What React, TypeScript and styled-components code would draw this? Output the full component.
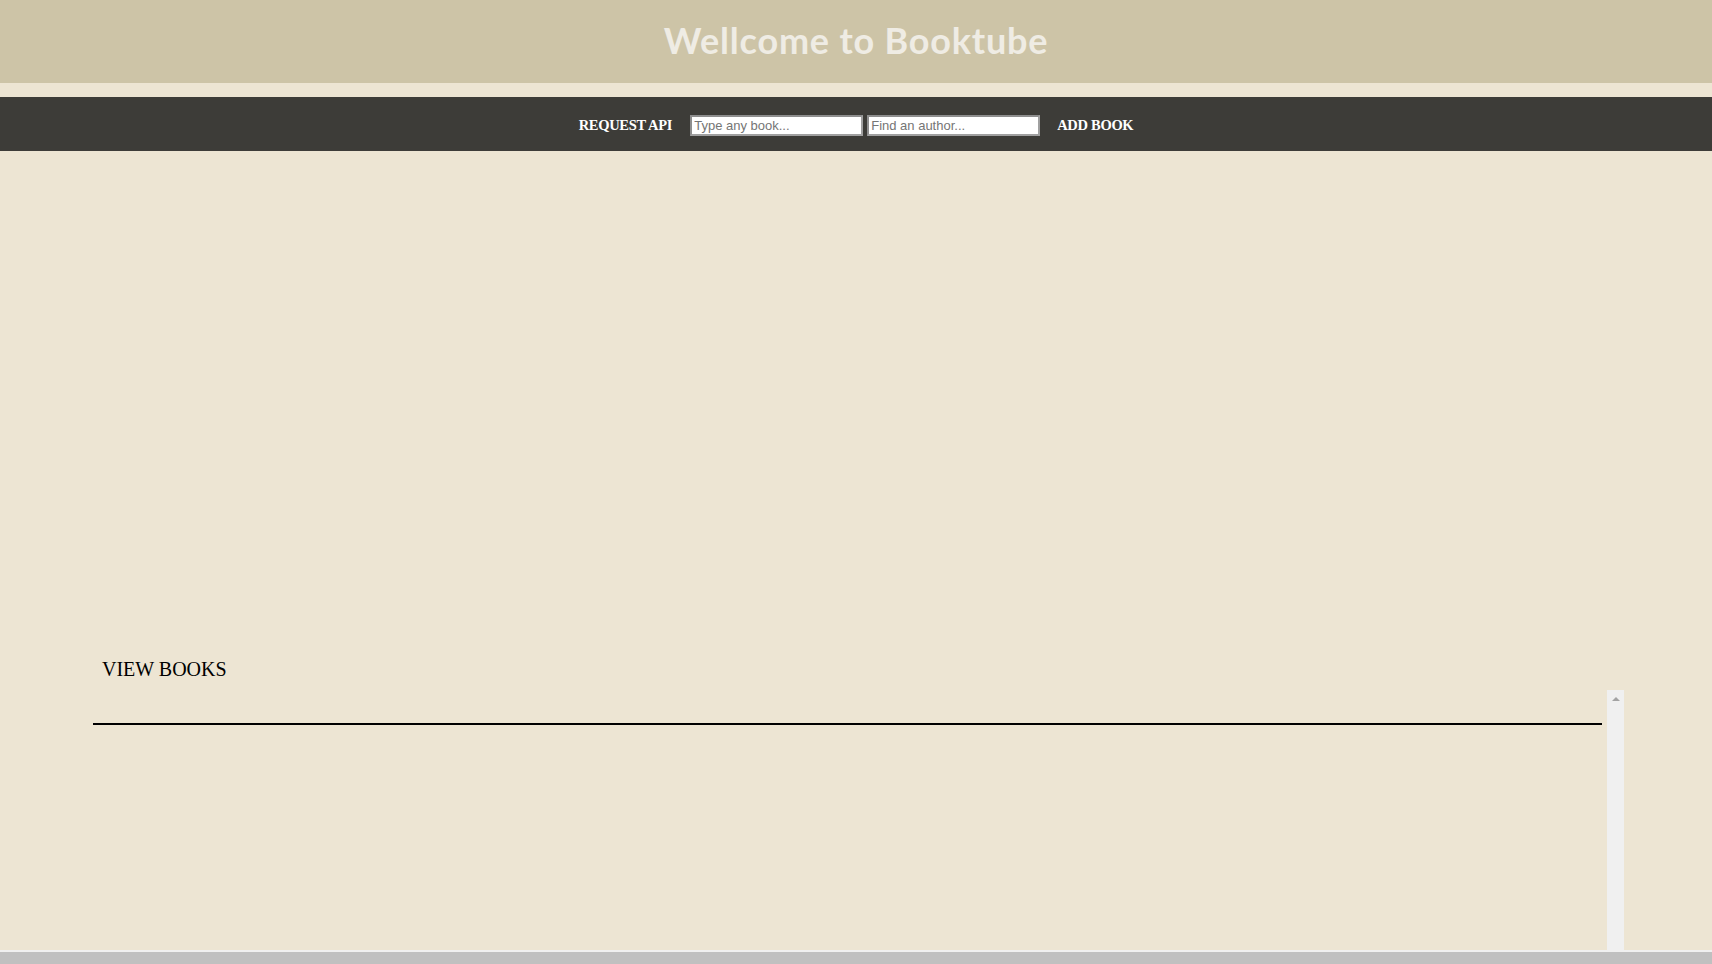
import React from "react";
import styled, { createGlobalStyle } from "styled-components";

const GlobalStyle = createGlobalStyle`
  html, body { margin: 0; padding: 0; }
  body { background: #ede5d3; overflow: hidden; }
  #root { height: 964px; }
`;

const Page = styled.div`
  height: 964px;
  display: flex;
  flex-direction: column;
  background: #ede5d3;
`;

const Header = styled.header`
  height: 83px;
  flex: 0 0 83px;
  background: #cdc4a7;
  display: flex;
  align-items: center;
  justify-content: center;
`;

const Title = styled.h1`
  margin: 0;
  font-family: "Lato", "DejaVu Sans", sans-serif;
  font-weight: 700;
  font-size: 36px;
  letter-spacing: 0.8px;
  color: #efece4;
  transform: translateY(-2px);
`;

const NavBar = styled.nav`
  margin-top: 14px;
  height: 54px;
  flex: 0 0 54px;
  background: #3d3c38;
  display: flex;
  align-items: center;
  justify-content: center;
`;

const NavLink = styled.a<{ $ml?: number; $mr?: number }>`
  font-family: "Liberation Serif", "Times New Roman", serif;
  font-weight: 700;
  font-size: 14.5px;
  color: #ffffff;
  text-decoration: none;
  margin-left: ${(p) => p.$ml ?? 0}px;
  margin-right: ${(p) => p.$mr ?? 0}px;
  cursor: pointer;
  letter-spacing: -0.3px;
  transform: translateY(1px);
`;

const Input = styled.input`
  box-sizing: border-box;
  width: 173px;
  height: 21px;
  margin: 2px 2px 0 2px;
  padding: 1px 2px;
  border: 2px solid #a0a0a0;
  border-top-color: #8e8e8e;
  border-left-color: #8e8e8e;
  background: #ffffff;
  font-family: "Liberation Sans", Arial, sans-serif;
  font-size: 13px;
  color: #333;
  outline: none;
  &::placeholder { color: #757575; }
`;

const Main = styled.main`
  flex: 1;
  display: flex;
  flex-direction: column;
  justify-content: flex-end;
`;

const SectionTitle = styled.h2`
  margin: 0 0 10px 102px;
  font-family: "Liberation Serif", "Times New Roman", serif;
  font-weight: 400;
  font-size: 20px;
  line-height: 22px;
  color: #000;
`;

const ListBox = styled.div`
  height: 260px;
  margin: 0 88px 0 93px;
  display: flex;
`;

const ListContent = styled.div`
  flex: 1;
  padding-top: 33px;
`;

const Rule = styled.div`
  height: 2px;
  background: #000;
`;

const ScrollTrack = styled.div`
  width: 17px;
  margin-left: 5px;
  background: #f0f0f0;
  display: flex;
  justify-content: center;
  padding-top: 7px;
  box-sizing: border-box;
`;

const UpArrow = styled.div`
  width: 0;
  height: 0;
  border-left: 4px solid transparent;
  border-right: 4px solid transparent;
  border-bottom: 4px solid #a3a3a3;
`;

const BottomBar = styled.div`
  height: 14px;
  flex: 0 0 14px;
  border-top: 2px solid #f0f0f0;
  box-sizing: border-box;
  background: #c0c0c0;
`;

export default function App() {
  return (
    <>
      <GlobalStyle />
      <Page>
        <Header>
          <Title>Wellcome to Booktube</Title>
        </Header>
        <NavBar>
          <NavLink $mr={16}>REQUEST API</NavLink>
          <Input placeholder="Type any book..." />
          <Input placeholder="Find an author..." />
          <NavLink $ml={15}>ADD BOOK</NavLink>
        </NavBar>
        <Main>
          <SectionTitle>VIEW BOOKS</SectionTitle>
          <ListBox>
            <ListContent>
              <Rule />
            </ListContent>
            <ScrollTrack>
              <UpArrow />
            </ScrollTrack>
          </ListBox>
        </Main>
        <BottomBar />
      </Page>
    </>
  );
}
